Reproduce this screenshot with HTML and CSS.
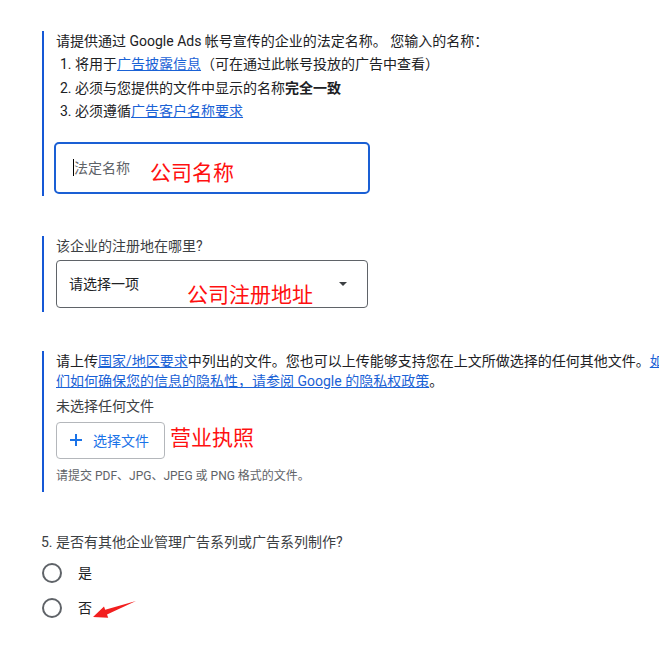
FILE: index.html
```html
<!DOCTYPE html>
<html lang="zh-CN">
<head>
<meta charset="utf-8">
<title>法定名称</title>
<link rel="stylesheet" href="styles.css">
</head>
<body>
<div class="page">
  <section class="block b1">
    <p class="lead">请提供通过 Google Ads 帐号宣传的企业的法定名称。 您输入的名称：</p>
    <ol class="rules">
      <li>1. 将用于<a href="#">广告披露信息</a>（可在通过此帐号投放的广告中查看）</li>
      <li>2. 必须与您提供的文件中显示的名称<b>完全一致</b></li>
      <li>3. 必须遵循<a href="#">广告客户名称要求</a></li>
    </ol>
    <div class="field"><span class="caret"></span><span class="ph">法定名称</span><span class="note note1">公司名称</span></div>
  </section>

  <section class="block b2">
    <p class="question">该企业的注册地在哪里?</p>
    <div class="select">
      <span class="sel-text">请选择一项</span>
      <span class="arrow"></span>
      <span class="note note2">公司注册地址</span>
    </div>
  </section>

  <section class="block b3">
    <p class="upload-text">请上传<a href="#">国家/地区要求</a>中列出的文件。您也可以上传能够支持您在上文所做选择的任何其他文件。<a href="#">如需了解我</a><br><a href="#">们如何确保您的信息的隐私性，请参阅 Google 的隐私权政策</a>。</p>
    <p class="picked">未选择任何文件</p>
    <div class="upload-row">
      <button class="file-btn" type="button">
        <svg class="plus" width="12" height="12" viewBox="0 0 12 12"><path d="M6 0v12M0 6h12" stroke="#1a73e8" stroke-width="2" fill="none"/></svg>
        <span>选择文件</span>
      </button>
      <span class="note note3">营业执照</span>
    </div>
    <p class="helper">请提交 PDF、JPG、JPEG 或 PNG 格式的文件。</p>
  </section>

  <p class="q4">5. 是否有其他企业管理广告系列或广告系列制作?</p>
  <div class="radios">
    <div class="radio-row"><span class="radio"></span><span class="radio-label">是</span></div>
    <div class="radio-row"><span class="radio"></span><span class="radio-label">否</span>
      <svg class="red-arrow" width="52" height="24" viewBox="0 0 52 24"><polygon points="5,19 16,8.5 17.2,11.8 48,3 19,16.4 20.2,19.7" fill="#f21f1f"/></svg>
    </div>
  </div>
</div>
</body>
</html>
```

FILE: styles.css
```css
html, body {
  margin: 0;
  background: #ffffff;
}

body {
  font-family: Roboto, "Noto Sans CJK SC", sans-serif;
  font-size: 14px;
  color: #202124;
  overflow: hidden;
}

.page {
  padding: 31px 0 0 42px;
}

p {
  margin: 0;
}

a {
  color: #1a62d6;
  text-decoration: underline;
}

.block {
  border-left: 2px solid #1558d6;
  padding-left: 12px;
}

.lead {
  line-height: 20px;
}

.rules {
  list-style: none;
  margin: 2px 0 0;
  padding: 0 0 0 4px;
  line-height: 23.5px;
}

.rules b {
  font-weight: 700;
}

.b1 {
  padding-bottom: 2px;
}

.field {
  margin: 18px 0 0 -2px;
  width: 316px;
  height: 52px;
  box-sizing: border-box;
  border: 2px solid #1a5fd4;
  border-radius: 5px;
  display: flex;
  align-items: center;
  padding-left: 17px;
}

.caret {
  display: inline-block;
  width: 1px;
  height: 17px;
  background: #000;
}

.ph {
  color: #5f6368;
  line-height: 20px;
}

.note {
  color: #ff1010;
  font-size: 21px;
  line-height: 21px;
  font-family: "Noto Sans CJK SC", sans-serif;
}

.note1 {
  margin-left: 20px;
  margin-top: 7px;
}

.b2 {
  margin-top: 40px;
  padding-bottom: 4px;
}

.question {
  line-height: 20px;
  color: #3c4043;
}

.select {
  position: relative;
  margin-top: 4px;
  width: 312px;
  height: 48px;
  box-sizing: border-box;
  border: 1px solid #5f6368;
  border-radius: 4px;
  display: flex;
  align-items: center;
  justify-content: space-between;
  padding: 0 20px 0 12px;
}

.sel-text {
  color: #202124;
  line-height: 20px;
}

.arrow {
  width: 0;
  height: 0;
  border-left: 4px solid transparent;
  border-right: 4px solid transparent;
  border-top: 4px solid #3c4043;
}

.note2 {
  position: absolute;
  left: 130px;
  top: 22px;
}

.b3 {
  margin-top: 39px;
  padding-bottom: 8px;
}

.upload-text {
  line-height: 20px;
  white-space: nowrap;
  color: #202124;
}

.picked {
  margin-top: 5px;
  line-height: 20px;
  color: #3c4043;
}

.upload-row {
  display: flex;
  align-items: flex-start;
  margin-top: 6px;
}

.file-btn {
  width: 109px;
  height: 37px;
  box-sizing: border-box;
  border: 1px solid #b4b7bb;
  border-radius: 4px;
  background: #fff;
  display: flex;
  align-items: center;
  padding: 0 0 0 13px;
  font-family: Roboto, "Noto Sans CJK SC", sans-serif;
  font-size: 14px;
  color: #1a73e8;
  gap: 11px;
}

.note3 {
  margin-left: 5px;
  margin-top: 4px;
}

.helper {
  margin-top: 9px;
  font-size: 12px;
  line-height: 16px;
  color: #5f6368;
}

.q4 {
  margin: 40px 0 0 -1px;
  line-height: 20px;
  color: #3c4043;
}

.radios {
  margin-top: 4px;
}

.radio-row {
  position: relative;
  height: 35px;
  display: flex;
  align-items: center;
  gap: 16px;
}

.radio {
  width: 20px;
  height: 20px;
  box-sizing: border-box;
  border: 2px solid #5f6368;
  border-radius: 50%;
}

.radio-label {
  color: #202124;
  line-height: 20px;
}

.red-arrow {
  position: absolute;
  left: 46px;
  top: 7px;
}
```
